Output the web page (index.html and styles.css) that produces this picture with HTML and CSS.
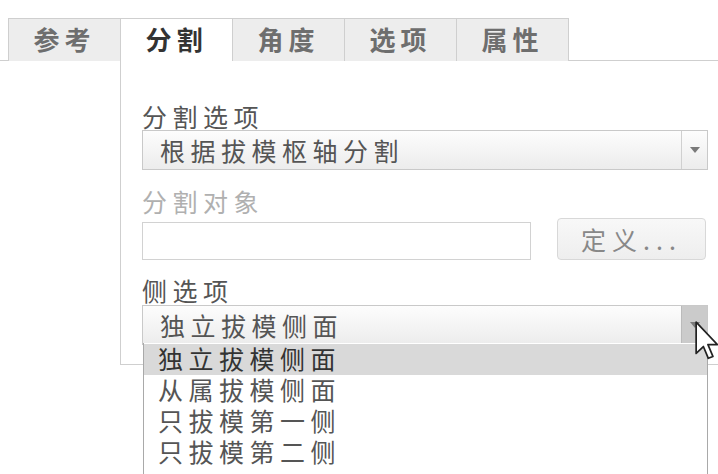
FILE: index.html
```html
<!DOCTYPE html>
<html lang="zh-CN">
<head>
    <meta charset="UTF-8">
    <title>分割</title>
    <link rel="stylesheet" href="styles.css">
</head>
<body>
    <!-- tabs -->
    <div class="tab-bar">
        <div class="tab">参考</div>
        <div class="tab active">分割</div>
        <div class="tab">角度</div>
        <div class="tab">选项</div>
        <div class="tab last">属性</div>
    </div>

    <!-- panel -->
    <div class="panel">
        <div class="label">分割选项</div>
        <div class="select">
            <span class="select-text">根据拔模枢轴分割</span>
            <span class="select-btn"><i class="arrow"></i></span>
        </div>

        <div class="label label-off">分割对象</div>
        <div class="row">
            <div class="input"></div>
            <div class="button">定义...</div>
        </div>

        <div class="label label-side">侧选项</div>
        <div class="select select-open">
            <span class="select-text">独立拔模侧面</span>
            <span class="select-btn hover"><i class="arrow"></i></span>
        </div>
    </div>

    <!-- open list -->
    <ul class="list">
        <li class="selected">独立拔模侧面</li>
        <li>从属拔模侧面</li>
        <li>只拔模第一侧</li>
        <li>只拔模第二侧</li>
    </ul>

    <svg class="cursor" width="24" height="40" viewBox="0 0 12.6 21">
        <path d="M0.6 0.6 L0.6 17 L4.4 13.4 L7 19.6 L9.4 18.6 L6.8 12.4 L11.8 12.4 Z" fill="#fff" stroke="#222" stroke-width="0.9" stroke-linejoin="round"/>
    </svg>
</body>
</html>
```

FILE: styles.css
```css
body {
    margin: 0;
    background: #fff;
    font-family: "Noto Sans CJK SC", "Noto Sans", sans-serif;
    color: #555;
    position: relative;
    height: 474px;
    overflow: hidden;
}

/* tabs */
.tab-bar {
    display: flex;
    margin-top: 18px;
    padding-left: 8px;
    border-bottom: 1px solid #cfcfcf;
    height: 42px;
}
.tab {
    width: 111px;
    height: 42px;
    border-top: 1px solid #cfcfcf;
    border-left: 1px solid #cfcfcf;
    background: #ededed;
    color: #6e6e6e;
    font-size: 26px;
    font-weight: bold;
    letter-spacing: 5px;
    line-height: 40px;
    text-align: center;
    box-sizing: content-box;
}
.tab.last {
    border-right: 1px solid #cfcfcf;
}
.tab.active {
    background: #fff;
    color: #333;
    height: 43px;
}

/* panel */
.panel {
    margin-left: 120px;
    border-left: 1px solid #cfcfcf;
    border-bottom: 1px solid #cfcfcf;
    padding: 42px 10px 19px 21px;
}
.label {
    font-size: 25px;
    letter-spacing: 5.5px;
    line-height: 26px;
    color: #555;
    margin-bottom: 1px;
}
.label-off {
    color: #b0b0b0;
    margin-top: 18px;
    margin-bottom: 4px;
}
.label-side {
    margin-top: 17px;
    margin-bottom: 2px;
}

.select {
    display: flex;
    height: 38px;
    border: 1px solid #c9c9c9;
    background: linear-gradient(#fdfdfd, #ececec);
}
.select-text {
    flex: 1;
    padding-left: 17px;
    font-size: 25px;
    letter-spacing: 5.5px;
    line-height: 38px;
    color: #555;
}
.select-btn {
    width: 25px;
    border-left: 1px solid #d0d0d0;
    display: flex;
    align-items: center;
    justify-content: center;
}
.select-btn.hover {
    background: #cbcbcb;
    border-left-color: #bbb;
}
.arrow {
    width: 0;
    height: 0;
    border-left: 5px solid transparent;
    border-right: 5px solid transparent;
    border-top: 6px solid #7a7a7a;
}

.row {
    display: flex;
    align-items: flex-end;
    gap: 26px;
}
.input {
    width: 387px;
    height: 36px;
    border: 1px solid #d2d2d2;
    background: #fff;
}
.button {
    width: 147px;
    height: 40px;
    border: 1px solid #d8d8d8;
    border-radius: 4px;
    background: linear-gradient(#f8f8f8, #eeeeee);
    color: #888;
    font-size: 25px;
    letter-spacing: 6px;
    line-height: 40px;
    text-align: center;
}

/* open list */
.list {
    position: absolute;
    top: 343px;
    left: 143px;
    width: 563px;
    height: 140px;
    margin: 0;
    padding: 1px 0 0;
    list-style: none;
    background: #fff;
    border-left: 1px solid #a9a9a9;
    border-right: 1px solid #a9a9a9;
    font-family: "Liberation Sans", "Noto Sans CJK SC", sans-serif;
}
.list li {
    height: 29px;
    padding: 2px 0 0 14px;
    font-size: 25px;
    letter-spacing: 5.5px;
    line-height: 29px;
    color: #555;
}
.list li.selected {
    background: #d9d9d9;
    color: #333;
}

.cursor {
    position: absolute;
    left: 695px;
    top: 321px;
}
```
